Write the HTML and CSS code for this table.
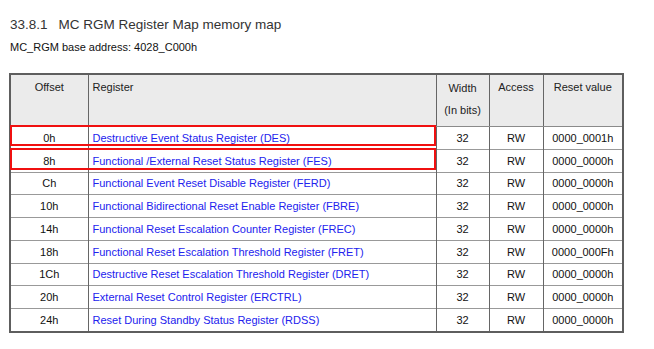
FILE: index.html
```html
<!DOCTYPE html>
<html lang="en">
<head>
<meta charset="utf-8">
<title>MC RGM Register Map memory map</title>
<link rel="stylesheet" href="styles.css">
</head>
<body>
<div class="page">
  <h1 class="title"><span class="num">33.8.1</span>MC RGM Register Map memory map</h1>
  <p class="base">MC_RGM base address: 4028_C000h</p>
  <div class="map">
    <table class="regs">
      <colgroup>
        <col class="c-off"><col class="c-reg"><col class="c-wid"><col class="c-acc"><col class="c-rst">
      </colgroup>
      <thead>
        <tr>
          <th class="center">Offset</th>
          <th class="left">Register</th>
          <th class="center wid">Width<br>(In bits)</th>
          <th class="center">Access</th>
          <th class="center">Reset value</th>
        </tr>
      </thead>
      <tbody>
        <tr><td class="center">0h</td><td class="link">Destructive Event Status Register (DES)</td><td class="center">32</td><td class="center">RW</td><td class="center">0000_0001h</td></tr>
        <tr><td class="center">8h</td><td class="link">Functional /External Reset Status Register (FES)</td><td class="center">32</td><td class="center">RW</td><td class="center">0000_0000h</td></tr>
        <tr><td class="center">Ch</td><td class="link">Functional Event Reset Disable Register (FERD)</td><td class="center">32</td><td class="center">RW</td><td class="center">0000_0000h</td></tr>
        <tr><td class="center">10h</td><td class="link">Functional Bidirectional Reset Enable Register (FBRE)</td><td class="center">32</td><td class="center">RW</td><td class="center">0000_0000h</td></tr>
        <tr><td class="center">14h</td><td class="link">Functional Reset Escalation Counter Register (FREC)</td><td class="center">32</td><td class="center">RW</td><td class="center">0000_0000h</td></tr>
        <tr><td class="center">18h</td><td class="link">Functional Reset Escalation Threshold Register (FRET)</td><td class="center">32</td><td class="center">RW</td><td class="center">0000_000Fh</td></tr>
        <tr><td class="center">1Ch</td><td class="link">Destructive Reset Escalation Threshold Register (DRET)</td><td class="center">32</td><td class="center">RW</td><td class="center">0000_0000h</td></tr>
        <tr><td class="center">20h</td><td class="link">External Reset Control Register (ERCTRL)</td><td class="center">32</td><td class="center">RW</td><td class="center">0000_0000h</td></tr>
        <tr><td class="center">24h</td><td class="link">Reset During Standby Status Register (RDSS)</td><td class="center">32</td><td class="center">RW</td><td class="center">0000_0000h</td></tr>
      </tbody>
    </table>
    <div class="mark mark-1"></div>
    <div class="mark mark-2"></div>
  </div>
</div>
</body>
</html>
```
FILE: styles.css
```css
html, body {
  margin: 0;
  padding: 0;
  background: #ffffff;
}
body {
  font-family: "Liberation Sans", Arial, sans-serif;
  color: #111;
}
.page {
  padding: 17px 0 0 9px;
}
.title {
  margin: 0 0 7px 1px;
  font-size: 13.5px;
  line-height: 16px;
  font-weight: normal;
  color: #333;
}
.title .num {
  margin-right: 11px;
}
.base {
  margin: 0 0 19px 1px;
  font-size: 11px;
  line-height: 14px;
  color: #111;
}
.map {
  position: relative;
  width: 613px;
}
.regs {
  width: 613px;
  border-collapse: collapse;
  table-layout: fixed;
  font-size: 11px;
  border: 2px solid #5e5e5e;
}
.c-off { width: 78px; }
.c-reg { width: 348px; }
.c-wid { width: 53px; }
.c-acc { width: 54px; }
.c-rst { width: 80px; }
.regs th {
  background: #ebebeb;
  font-weight: normal;
  color: #222;
  height: 46px;
  vertical-align: top;
  padding: 5px 4px 0;
  line-height: 14px;
  border-left: 1px solid #666;
  border-right: 1px solid #666;
  border-bottom: 1px solid #8a8a8a;
}
.regs th.wid {
  padding-top: 2px;
  line-height: 22px;
}
.regs td {
  height: 21.75px;
  padding: 0 4px;
  line-height: 14px;
  vertical-align: middle;
  border-left: 1px solid #666;
  border-right: 1px solid #666;
  border-top: 1px solid #999;
  white-space: nowrap;
  color: #111;
}
.center { text-align: center; }
.left { text-align: left; }
.regs td.link {
  color: #2222ee;
  text-align: left;
}
.mark {
  position: absolute;
  left: 1px;
  width: 426px;
  border: 2px solid #f01010;
  box-sizing: border-box;
  pointer-events: none;
}
.mark-1 {
  top: 52px;
  height: 21px;
}
.mark-2 {
  top: 75px;
  height: 22px;
}
```
